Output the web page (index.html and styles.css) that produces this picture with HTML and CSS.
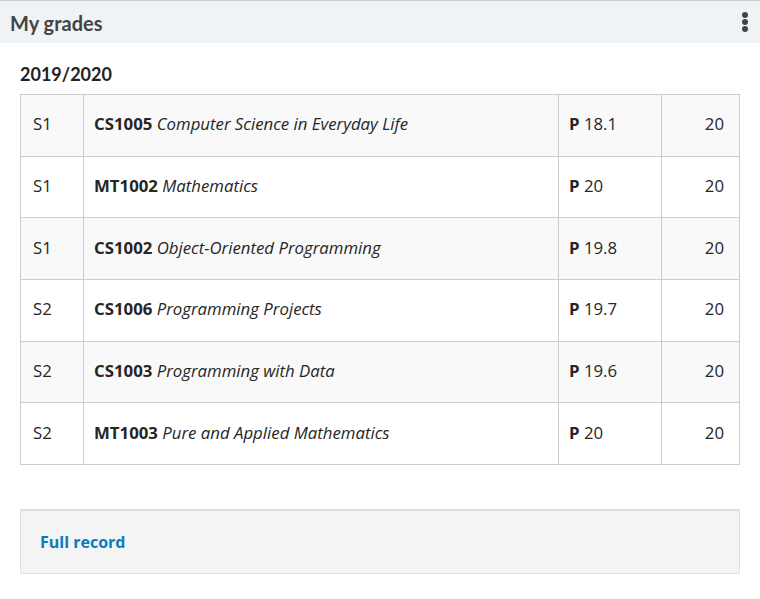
FILE: index.html
```html
<!DOCTYPE html>
<html>
<head>
<meta charset="utf-8">
<link rel="stylesheet" href="styles.css">
</head>
<body>
<div class="panel">
  <div class="panel-header">
    <h2 class="panel-title">My grades</h2>
    <span class="kebab"><i></i><i></i><i></i></span>
  </div>
  <div class="panel-body">
    <h3 class="year">2019/2020</h3>
    <table class="grades">
      <colgroup><col class="c1"><col class="c2"><col class="c3"><col class="c4"></colgroup>
      <tr><td>S1</td><td><b>CS1005</b> <em>Computer Science in Everyday Life</em></td><td><b>P</b> 18.1</td><td class="num">20</td></tr>
      <tr><td>S1</td><td><b>MT1002</b> <em>Mathematics</em></td><td><b>P</b> 20</td><td class="num">20</td></tr>
      <tr><td>S1</td><td><b>CS1002</b> <em>Object-Oriented Programming</em></td><td><b>P</b> 19.8</td><td class="num">20</td></tr>
      <tr><td>S2</td><td><b>CS1006</b> <em>Programming Projects</em></td><td><b>P</b> 19.7</td><td class="num">20</td></tr>
      <tr><td>S2</td><td><b>CS1003</b> <em>Programming with Data</em></td><td><b>P</b> 19.6</td><td class="num">20</td></tr>
      <tr><td>S2</td><td><b>MT1003</b> <em>Pure and Applied Mathematics</em></td><td><b>P</b> 20</td><td class="num">20</td></tr>
    </table>
    <div class="footer-box"><a class="full-link" href="#">Full record</a></div>
  </div>
</div>
</body>
</html>
```
FILE: styles.css
```css
html, body { margin: 0; padding: 0; background: #fff; }
body { font-family: "Open Sans", "Liberation Sans", sans-serif; color: #222; }
.panel { width: 760px; }
.panel-header {
  border-top: 1px solid #c9ccd0;
  background: #f0f3f6;
  height: 42px;
  display: flex;
  align-items: center;
  justify-content: space-between;
  padding: 0 10px;
}
.panel-title {
  margin: 0;
  font-family: Lato, "Open Sans", sans-serif;
  font-weight: 700;
  font-size: 20px;
  color: #444;
  position: relative;
  top: 1px;
}
.kebab { display: flex; flex-direction: column; gap: 1px; margin-right: 2px; }
.kebab i { display: block; width: 6px; height: 6px; border-radius: 50%; background: #444; }
.panel-body { padding: 0 20px; }
.year {
  margin: 19px 0 8px;
  font-family: Lato, "Open Sans", sans-serif;
  font-weight: 700;
  font-size: 18px;
  line-height: 24px;
  color: #222;
}
.grades { width: 720px; border-collapse: collapse; font-size: 16.8px; color: #262626; }
.grades .c1 { width: 63px; }
.grades .c2 { width: 475px; }
.grades .c3 { width: 103px; }
.grades .c4 { width: 78px; }
.grades td { border: 1px solid #ccc; height: 61.67px; padding: 0 10px 3px; box-sizing: border-box; vertical-align: middle; }
.grades td:first-child { padding-left: 12px; }
.grades td.num { text-align: right; padding-right: 15px; }
.grades tr:nth-child(odd) td { background: #f9f9f9; }
.grades b { font-weight: 700; }
.grades em { font-style: italic; }
.footer-box {
  margin-top: 44px;
  background: #f4f4f4;
  border: 1px solid #e0e0e0;
  border-top-width: 2px;
  height: 62px;
  display: flex;
  align-items: center;
  padding: 0 19px;
}
.full-link { color: #0a7bc1; font-weight: 700; font-size: 16px; text-decoration: none; }
```
